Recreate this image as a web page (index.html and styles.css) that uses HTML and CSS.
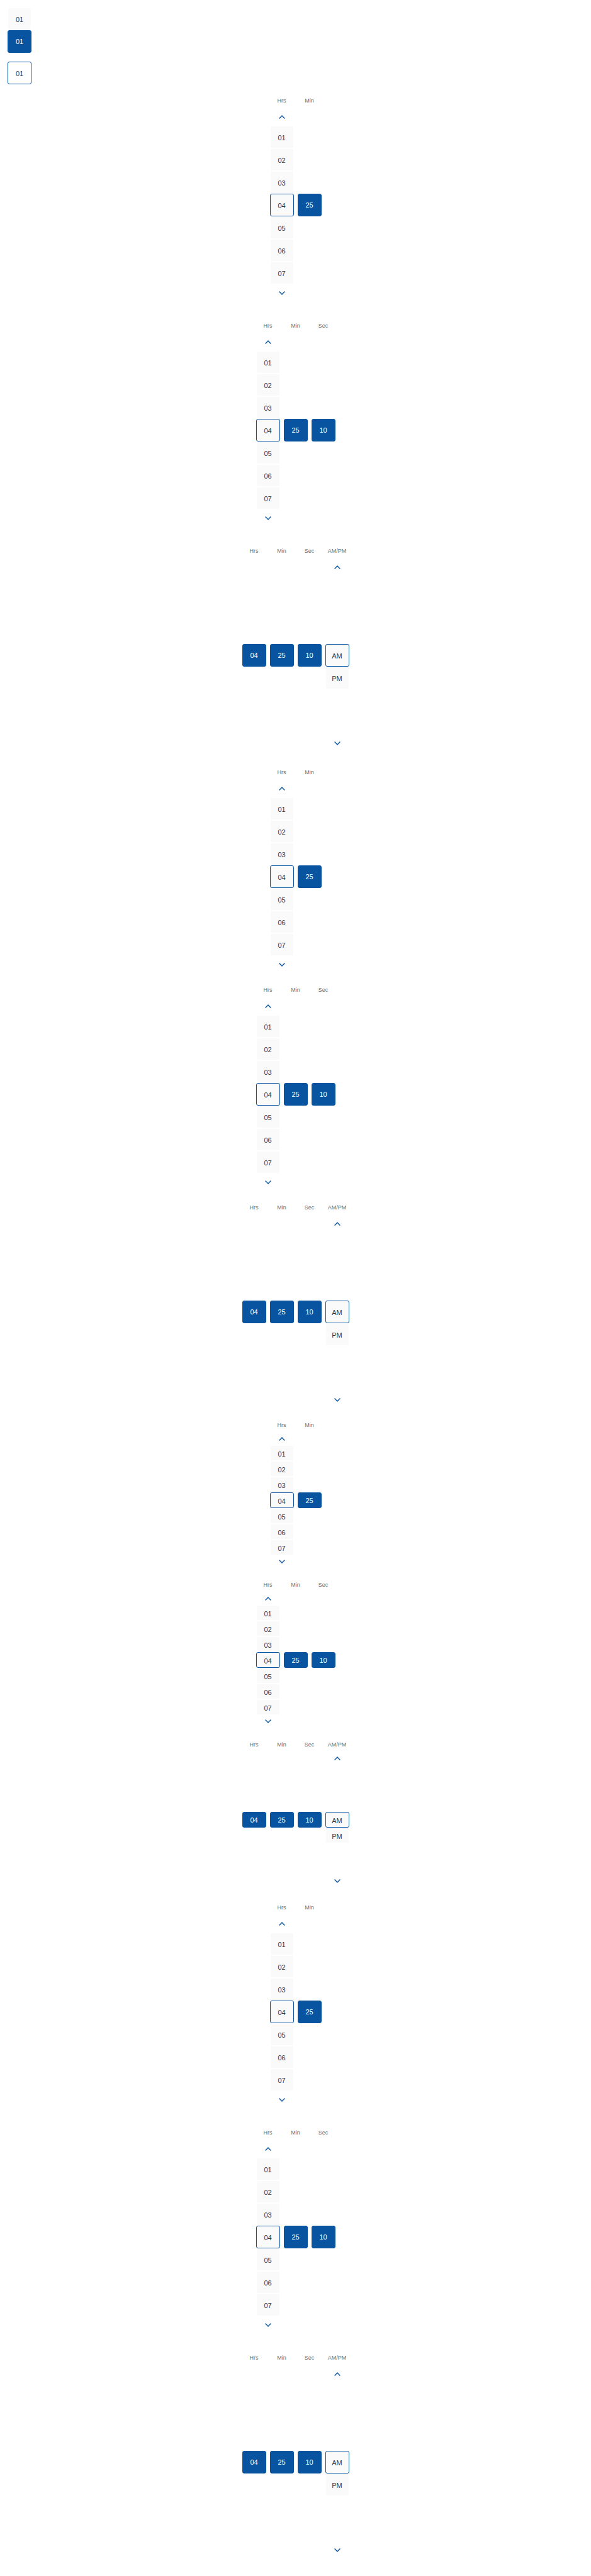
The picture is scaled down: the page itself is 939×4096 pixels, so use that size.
FILE: index.html
```html
<!DOCTYPE html>
<html lang="en">
<head>
<meta charset="utf-8">
<meta name="viewport" content="width=device-width, initial-scale=1">
<title>Time picker</title>
<link rel="stylesheet" href="styles.css">
</head>
<body>
<svg class="sprite" aria-hidden="true">
  <symbol id="up" viewBox="0 0 10 6"><path d="M.6 5.4 5 1.1l4.4 4.3"/></symbol>
  <symbol id="down" viewBox="0 0 10 6"><path d="M.6.6 5 4.9 9.4.6"/></symbol>
</svg>
<main class="page">
  <section class="states">
    <button class="cell">01</button>
    <button class="cell selected">01</button>
    <button class="cell focused plain">01</button>
  </section>

  <section class="group spacious">
    <div class="time">
      <div class="column"><span class="label">Hrs</span><button class="arrow" aria-label="Previous hour"><svg><use href="#up"/></svg></button><div class="list"><button class="cell">01</button><button class="cell">02</button><button class="cell">03</button><button class="cell focused">04</button><button class="cell">05</button><button class="cell">06</button><button class="cell">07</button></div><button class="arrow" aria-label="Next hour"><svg><use href="#down"/></svg></button></div>
      <div class="column"><span class="label">Min</span><div class="slot"><button class="cell selected">25</button></div></div>
    </div>
    <div class="time">
      <div class="column"><span class="label">Hrs</span><button class="arrow" aria-label="Previous hour"><svg><use href="#up"/></svg></button><div class="list"><button class="cell">01</button><button class="cell">02</button><button class="cell">03</button><button class="cell focused">04</button><button class="cell">05</button><button class="cell">06</button><button class="cell">07</button></div><button class="arrow" aria-label="Next hour"><svg><use href="#down"/></svg></button></div>
      <div class="column"><span class="label">Min</span><div class="slot"><button class="cell selected">25</button></div></div>
      <div class="column"><span class="label">Sec</span><div class="slot"><button class="cell selected">10</button></div></div>
    </div>
    <div class="time">
      <div class="column"><span class="label">Hrs</span><div class="slot"><button class="cell selected">04</button></div></div>
      <div class="column"><span class="label">Min</span><div class="slot"><button class="cell selected">25</button></div></div>
      <div class="column"><span class="label">Sec</span><div class="slot"><button class="cell selected">10</button></div></div>
      <div class="column"><span class="label">AM/PM</span><button class="arrow" aria-label="Previous period"><svg><use href="#up"/></svg></button><div class="list"><button class="cell focused middle">AM</button><button class="cell after-middle">PM</button></div><button class="arrow" aria-label="Next period"><svg><use href="#down"/></svg></button></div>
    </div>
  </section>

  <section class="group tablet">
    <div class="time">
      <div class="column"><span class="label">Hrs</span><button class="arrow" aria-label="Previous hour"><svg><use href="#up"/></svg></button><div class="list"><button class="cell">01</button><button class="cell">02</button><button class="cell">03</button><button class="cell focused">04</button><button class="cell">05</button><button class="cell">06</button><button class="cell">07</button></div><button class="arrow" aria-label="Next hour"><svg><use href="#down"/></svg></button></div>
      <div class="column"><span class="label">Min</span><div class="slot"><button class="cell selected">25</button></div></div>
    </div>
    <div class="time">
      <div class="column"><span class="label">Hrs</span><button class="arrow" aria-label="Previous hour"><svg><use href="#up"/></svg></button><div class="list"><button class="cell">01</button><button class="cell">02</button><button class="cell">03</button><button class="cell focused">04</button><button class="cell">05</button><button class="cell">06</button><button class="cell">07</button></div><button class="arrow" aria-label="Next hour"><svg><use href="#down"/></svg></button></div>
      <div class="column"><span class="label">Min</span><div class="slot"><button class="cell selected">25</button></div></div>
      <div class="column"><span class="label">Sec</span><div class="slot"><button class="cell selected">10</button></div></div>
    </div>
    <div class="time">
      <div class="column"><span class="label">Hrs</span><div class="slot"><button class="cell selected">04</button></div></div>
      <div class="column"><span class="label">Min</span><div class="slot"><button class="cell selected">25</button></div></div>
      <div class="column"><span class="label">Sec</span><div class="slot"><button class="cell selected">10</button></div></div>
      <div class="column"><span class="label">AM/PM</span><button class="arrow" aria-label="Previous period"><svg><use href="#up"/></svg></button><div class="list"><button class="cell focused middle">AM</button><button class="cell after-middle">PM</button></div><button class="arrow" aria-label="Next period"><svg><use href="#down"/></svg></button></div>
    </div>
  </section>

  <section class="group compact">
    <div class="time">
      <div class="column"><span class="label">Hrs</span><button class="arrow" aria-label="Previous hour"><svg><use href="#up"/></svg></button><div class="list"><button class="cell">01</button><button class="cell">02</button><button class="cell">03</button><button class="cell focused">04</button><button class="cell">05</button><button class="cell">06</button><button class="cell">07</button></div><button class="arrow" aria-label="Next hour"><svg><use href="#down"/></svg></button></div>
      <div class="column"><span class="label">Min</span><div class="slot"><button class="cell selected">25</button></div></div>
    </div>
    <div class="time">
      <div class="column"><span class="label">Hrs</span><button class="arrow" aria-label="Previous hour"><svg><use href="#up"/></svg></button><div class="list"><button class="cell">01</button><button class="cell">02</button><button class="cell">03</button><button class="cell focused">04</button><button class="cell">05</button><button class="cell">06</button><button class="cell">07</button></div><button class="arrow" aria-label="Next hour"><svg><use href="#down"/></svg></button></div>
      <div class="column"><span class="label">Min</span><div class="slot"><button class="cell selected">25</button></div></div>
      <div class="column"><span class="label">Sec</span><div class="slot"><button class="cell selected">10</button></div></div>
    </div>
    <div class="time">
      <div class="column"><span class="label">Hrs</span><div class="slot"><button class="cell selected">04</button></div></div>
      <div class="column"><span class="label">Min</span><div class="slot"><button class="cell selected">25</button></div></div>
      <div class="column"><span class="label">Sec</span><div class="slot"><button class="cell selected">10</button></div></div>
      <div class="column"><span class="label">AM/PM</span><button class="arrow" aria-label="Previous period"><svg><use href="#up"/></svg></button><div class="list"><button class="cell focused middle">AM</button><button class="cell after-middle">PM</button></div><button class="arrow" aria-label="Next period"><svg><use href="#down"/></svg></button></div>
    </div>
  </section>

  <section class="group spacious">
    <div class="time">
      <div class="column"><span class="label">Hrs</span><button class="arrow" aria-label="Previous hour"><svg><use href="#up"/></svg></button><div class="list"><button class="cell">01</button><button class="cell">02</button><button class="cell">03</button><button class="cell focused">04</button><button class="cell">05</button><button class="cell">06</button><button class="cell">07</button></div><button class="arrow" aria-label="Next hour"><svg><use href="#down"/></svg></button></div>
      <div class="column"><span class="label">Min</span><div class="slot"><button class="cell selected">25</button></div></div>
    </div>
    <div class="time">
      <div class="column"><span class="label">Hrs</span><button class="arrow" aria-label="Previous hour"><svg><use href="#up"/></svg></button><div class="list"><button class="cell">01</button><button class="cell">02</button><button class="cell">03</button><button class="cell focused">04</button><button class="cell">05</button><button class="cell">06</button><button class="cell">07</button></div><button class="arrow" aria-label="Next hour"><svg><use href="#down"/></svg></button></div>
      <div class="column"><span class="label">Min</span><div class="slot"><button class="cell selected">25</button></div></div>
      <div class="column"><span class="label">Sec</span><div class="slot"><button class="cell selected">10</button></div></div>
    </div>
    <div class="time">
      <div class="column"><span class="label">Hrs</span><div class="slot"><button class="cell selected">04</button></div></div>
      <div class="column"><span class="label">Min</span><div class="slot"><button class="cell selected">25</button></div></div>
      <div class="column"><span class="label">Sec</span><div class="slot"><button class="cell selected">10</button></div></div>
      <div class="column"><span class="label">AM/PM</span><button class="arrow" aria-label="Previous period"><svg><use href="#up"/></svg></button><div class="list"><button class="cell focused middle">AM</button><button class="cell after-middle">PM</button></div><button class="arrow" aria-label="Next period"><svg><use href="#down"/></svg></button></div>
    </div>
  </section>
</main>
</body>
</html>
```
FILE: styles.css
```css
* {
  box-sizing: border-box;
}

body {
  margin: 0;
  background: #fff;
  color: #32363a;
  font-family: "Liberation Sans", Arial, sans-serif;
}

.sprite {
  display: none;
}

.page {
  --cell: 36px;
  --arrow: 28px;
  display: flex;
  flex-direction: column;
  padding: 12px 0 27px;
}

.states {
  display: flex;
  flex-direction: column;
  align-items: flex-start;
  padding: 0 12px 14px;
}

.group {
  display: flex;
  flex-direction: column;
}

.spacious {
  gap: 26px;
}

.tablet {
  gap: 14px;
  padding: 20px 0 14px;
}

.compact {
  --cell: 25px;
  --arrow: 20px;
  gap: 15px;
  padding-bottom: 20px;
}

.time {
  display: flex;
  justify-content: center;
  gap: 6px;
}

.column {
  display: flex;
  flex-direction: column;
  align-items: center;
  width: 38px;
}

.label {
  color: #6a6d70;
  font-size: 9px;
  line-height: 24px;
  white-space: nowrap;
}

.list {
  display: grid;
  grid-template-rows: repeat(7, var(--cell));
}

.slot {
  flex: 1;
  display: flex;
  align-items: center;
}

.cell {
  width: 38px;
  height: var(--cell);
  padding: 2px 0 0;
  border: 1px solid transparent;
  border-radius: 3px;
  background: #fafafa padding-box;
  color: inherit;
  font: inherit;
  font-size: 11px;
  line-height: 14px;
  text-align: center;
}

.middle {
  grid-row: 4;
}

.after-middle {
  grid-row: 5;
}

.selected {
  padding: 0;
  border-color: #0854a0;
  background: #0854a0;
  color: #fff;
}

.focused {
  border-color: #0854a0;
}

.plain {
  margin-top: 14px;
  background: #fff;
}

.arrow {
  display: flex;
  align-items: center;
  justify-content: center;
  width: 38px;
  height: var(--arrow);
  padding: 0;
  border: 0;
  background: none;
  color: #0854a0;
}

.arrow svg {
  width: 10px;
  height: 6px;
  fill: none;
  stroke: currentColor;
  stroke-width: 1.4;
}
```
